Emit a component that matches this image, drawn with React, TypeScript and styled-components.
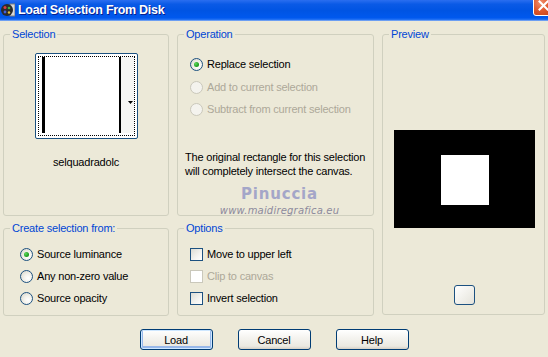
import React from "react";
import styled, { createGlobalStyle, css } from "styled-components";

const Global = createGlobalStyle`
  html, body { margin: 0; padding: 0; background: #ECE9D8; }
  * { box-sizing: border-box; }
`;

const Window = styled.div`
  width: 548px;
  height: 357px;
  overflow: hidden;
  background: #ECE9D8;
  font-family: Tahoma, "Liberation Sans", Arial, sans-serif;
  font-size: 11px;
  letter-spacing: -0.2px;
  color: #000;
  display: flex;
  flex-direction: column;
`;

const TitleBar = styled.div`
  height: 21px;
  flex: none;
  display: flex;
  align-items: flex-start;
  overflow: hidden;
  background: linear-gradient(
    to bottom,
    #2a6ef0 0%,
    #0a5ae6 20%,
    #0054e3 50%,
    #0058ee 85%,
    #2c78f5 96%,
    #c9d6ee 100%
  );
`;

const TitleIcon = styled.svg`
  flex: none;
  margin: 3px 0 0 1px;
`;

const TitleText = styled.span`
  margin: 3px 0 0 3px;
  color: #fff;
  font-family: "Liberation Sans", Arial, sans-serif;
  font-weight: bold;
  font-size: 12.5px;
  line-height: 15px;
  letter-spacing: -0.3px;
  text-shadow: 1px 1px 0 #0a1e8c;
  flex: 1;
`;

const CloseButton = styled.div`
  flex: none;
  width: 21px;
  height: 21px;
  margin-top: -5px;
  margin-right: -6px;
  border: 1px solid #fff;
  border-radius: 3px;
  background: radial-gradient(circle at 35% 35%, #f0906f 0%, #e05a2f 45%, #c23c15 100%);
  display: flex;
  align-items: center;
  justify-content: center;
`;

const Body = styled.div`
  padding: 7px 3px 0 3px;
  display: flex;
  flex-direction: column;
`;

const Panels = styled.div`
  display: grid;
  grid-template-columns: 166px 197px 163px;
  grid-template-rows: 188px 94px;
  column-gap: 8px;
  row-gap: 6px;
`;

const Group = styled.fieldset<{ $span?: boolean; $align?: string }>`
  margin: 0;
  min-width: 0;
  height: 100%;
  border: 1px solid #d0d0bf;
  border-radius: 3px;
  padding: 0;
  display: flex;
  flex-direction: column;
  align-items: ${(p) => p.$align || "stretch"};
  ${(p) =>
    p.$span &&
    css`
      grid-column: 3;
      grid-row: 1 / span 2;
      height: 287px;
    `}
`;

const Legend = styled.legend`
  margin-left: 6px;
  padding: 0 2px;
  color: #0046d5;
  line-height: 13px;
  font-size: 11px;
`;

const Thumb = styled.div`
  margin-top: 12px;
  width: 103px;
  height: 86px;
  border: 1px solid #1c5180;
  border-radius: 2px;
  background: #fff;
  padding: 2px;
  display: flex;
`;

const ThumbFocus = styled.div`
  flex: 1;
  border: 1px dotted #000;
  display: flex;
`;

const FileName = styled.div`
  margin-top: 16px;
  line-height: 14px;
  text-align: center;
`;

const OptionList = styled.div<{ $top: number; $left: number; $gap: number }>`
  display: flex;
  flex-direction: column;
  gap: ${(p) => p.$gap}px;
  margin-top: ${(p) => p.$top}px;
  padding-left: ${(p) => p.$left}px;
`;

const OptionRow = styled.label<{ $disabled?: boolean }>`
  display: flex;
  align-items: center;
  gap: 4px;
  height: 13px;
  line-height: 13px;
  white-space: nowrap;
  color: ${(p) => (p.$disabled ? "#aca899" : "#000")};
`;

const RadioDot = styled.span<{ $checked?: boolean; $disabled?: boolean }>`
  flex: none;
  width: 13px;
  height: 13px;
  border-radius: 50%;
  border: 1px solid ${(p) => (p.$disabled ? "#cac8bb" : "#1c5180")};
  background: ${(p) =>
    p.$disabled
      ? "#f4f3ee"
      : "radial-gradient(circle at 65% 65%, #ffffff 0%, #f3f2ec 40%, #d4d2c6 100%)"};
  display: flex;
  align-items: center;
  justify-content: center;
  &::after {
    content: "";
    display: ${(p) => (p.$checked ? "block" : "none")};
    width: 5px;
    height: 5px;
    border-radius: 50%;
    background: radial-gradient(circle at 35% 35%, #5fd85f 0%, #21a121 60%, #138013 100%);
  }
`;

const CheckBox = styled.span<{ $disabled?: boolean }>`
  flex: none;
  width: 13px;
  height: 13px;
  border: 1px solid ${(p) => (p.$disabled ? "#cac8bb" : "#1c5180")};
  background: ${(p) =>
    p.$disabled ? "#ffffff" : "linear-gradient(135deg, #dcdcd4 0%, #f4f4f0 60%, #ffffff 100%)"};
`;

const Note = styled.div`
  margin-top: 34px;
  padding-left: 7px;
  line-height: 14px;
  white-space: nowrap;
`;

const Watermark = styled.div`
  display: flex;
  flex-direction: column;
  align-items: center;
  margin-top: 7px;
  padding-left: 8px;
  letter-spacing: 0;
`;

const WaterName = styled.span`
  font-family: "DejaVu Sans", sans-serif;
  font-weight: bold;
  font-size: 15px;
  line-height: 19px;
  letter-spacing: 0.8px;
  color: #a4a6c8;
`;

const WaterUrl = styled.span`
  font-family: "DejaVu Sans", sans-serif;
  font-style: italic;
  font-size: 10px;
  line-height: 13px;
  letter-spacing: 0.2px;
  color: #8c8a9c;
`;

const PreviewCanvas = styled.div`
  margin-top: 89px;
  margin-left: 2px;
  width: 141px;
  height: 98px;
  background: #000;
  display: flex;
  align-items: center;
  justify-content: center;
`;

const PreviewSquare = styled.div`
  width: 48px;
  height: 50px;
  background: #fff;
  margin-left: 1px;
  margin-top: 2px;
`;

const SmallButton = styled.div`
  margin-top: 57px;
  margin-left: 2px;
  width: 21px;
  height: 20px;
  border: 1px solid #1c5180;
  border-radius: 3px;
  background: linear-gradient(135deg, #ffffff 0%, #f2f1ec 50%, #e4e2da 100%);
`;

const ButtonRow = styled.div`
  display: flex;
  justify-content: center;
  gap: 25px;
  margin-top: 13px;
`;

const Button = styled.button<{ $default?: boolean }>`
  width: 73px;
  height: 21px;
  padding: 0;
  font-family: Tahoma, "Liberation Sans", Arial, sans-serif;
  font-size: 11px;
  letter-spacing: -0.2px;
  color: #000;
  border: 1px solid #003c74;
  border-radius: 3px;
  background: linear-gradient(to bottom, #ffffff 0%, #f5f4f0 40%, #ebe9e1 85%, #d6d0c5 100%);
  ${(p) =>
    p.$default &&
    css`
      box-shadow: inset 0 0 0 1px #cee7ff, inset 0 -1px 0 2px #98b8ea;
    `}
`;

function Radio({ label, checked, disabled }: { label: string; checked?: boolean; disabled?: boolean }) {
  return (
    <OptionRow $disabled={disabled}>
      <RadioDot $checked={checked} $disabled={disabled} />
      {label}
    </OptionRow>
  );
}

function Check({ label, disabled }: { label: string; disabled?: boolean }) {
  return (
    <OptionRow $disabled={disabled}>
      <CheckBox $disabled={disabled} />
      {label}
    </OptionRow>
  );
}

export default function App() {
  return (
    <>
      <Global />
      <Window>
        <TitleBar>
          <TitleIcon width="14" height="14" viewBox="0 0 14 14">
            <rect x="9" y="1" width="5" height="12" fill="#d8d8d8" stroke="#7a7a7a" strokeWidth="1" />
            <circle cx="6" cy="7" r="6" fill="#2b2b2b" />
            <circle cx="4" cy="4.5" r="1.5" fill="#d84040" />
            <circle cx="8" cy="5" r="1.3" fill="#40b040" />
            <circle cx="4" cy="9" r="1.4" fill="#4060e0" />
            <circle cx="8" cy="9.5" r="1.2" fill="#e0c040" />
          </TitleIcon>
          <TitleText>Load Selection From Disk</TitleText>
          <CloseButton>
            <svg width="11" height="11" viewBox="0 0 11 11">
              <path d="M1.5 1.5 L9.5 9.5 M9.5 1.5 L1.5 9.5" stroke="#fff" strokeWidth="2" strokeLinecap="square" />
            </svg>
          </CloseButton>
        </TitleBar>
        <Body>
          <Panels>
            <Group $align="center">
              <Legend>Selection</Legend>
              <Thumb>
                <ThumbFocus>
                  <svg width="95" height="76" viewBox="0 0 95 76">
                    <rect x="0" y="0" width="95" height="76" fill="#fff" />
                    <rect x="3" y="0" width="3" height="76" fill="#000" />
                    <rect x="80" y="0" width="2" height="76" fill="#000" />
                    <rect x="82" y="0" width="13" height="76" fill="#f6f6f4" />
                    <path d="M89 44 L94 44 L91.5 47 Z" fill="#000" />
                  </svg>
                </ThumbFocus>
              </Thumb>
              <FileName>selquadradolc</FileName>
            </Group>
            <Group>
              <Legend>Operation</Legend>
              <OptionList $top={17} $left={12} $gap={9.5}>
                <Radio label="Replace selection" checked />
                <Radio label="Add to current selection" disabled />
                <Radio label="Subtract from current selection" disabled />
              </OptionList>
              <Note>
                The original rectangle for this selection
                <br />
                will completely intersect the canvas.
              </Note>
              <Watermark>
                <WaterName>Pinuccia</WaterName>
                <WaterUrl>www.maidiregrafica.eu</WaterUrl>
              </Watermark>
            </Group>
            <Group $span $align="center">
              <Legend>Preview</Legend>
              <PreviewCanvas>
                <PreviewSquare />
              </PreviewCanvas>
              <SmallButton />
            </Group>
            <Group>
              <Legend>Create selection from:</Legend>
              <OptionList $top={13} $left={16} $gap={9}>
                <Radio label="Source luminance" checked />
                <Radio label="Any non-zero value" />
                <Radio label="Source opacity" />
              </OptionList>
            </Group>
            <Group>
              <Legend>Options</Legend>
              <OptionList $top={13} $left={12} $gap={9}>
                <Check label="Move to upper left" />
                <Check label="Clip to canvas" disabled />
                <Check label="Invert selection" />
              </OptionList>
            </Group>
          </Panels>
          <ButtonRow>
            <Button $default>Load</Button>
            <Button>Cancel</Button>
            <Button>Help</Button>
          </ButtonRow>
        </Body>
      </Window>
    </>
  );
}
